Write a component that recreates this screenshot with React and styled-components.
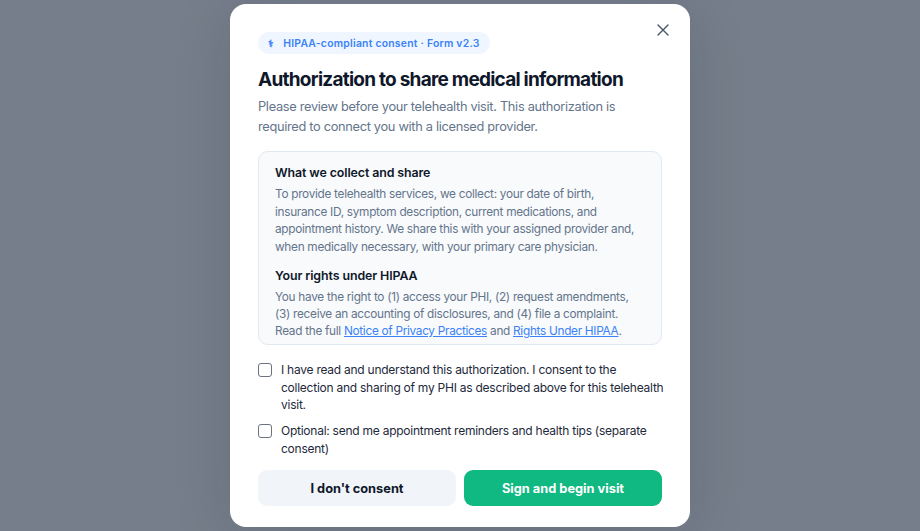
import React from 'react'
import styled, { createGlobalStyle } from 'styled-components'

const GlobalStyle = createGlobalStyle`
  html, body { margin: 0; padding: 0; height: 100%; }
  body { font-family: Inter, "Liberation Sans", sans-serif; background: #747c89; }
  * { box-sizing: border-box; }
`

const Overlay = styled.div`
  width: 100%;
  height: 531px;
  display: flex;
  align-items: center;
  justify-content: center;
  overflow: hidden;
  background: #767e8b;
`

const Modal = styled.div`
  position: relative;
  width: 460px;
  height: 523px;
  padding: 28px 28px 21px;
  background: #fff;
  border-radius: 16px;
  box-shadow: 0 8px 60px rgba(15, 23, 42, 0.14);
  display: flex;
  flex-direction: column;
`

const CloseButton = styled.button`
  position: absolute;
  top: 18px;
  right: 19px;
  width: 16px;
  height: 16px;
  padding: 0;
  border: none;
  background: none;
  color: #475569;
  display: flex;
`

const Badge = styled.div`
  align-self: flex-start;
  height: 22px;
  padding: 0 10px;
  display: flex;
  align-items: center;
  gap: 10px;
  border-radius: 999px;
  background: #eff6ff;
  color: #3b82f6;
  font-size: 10.4px;
  font-weight: 600;
  letter-spacing: 0.23px;
`

const Title = styled.h2`
  margin: 13.5px 0 0;
  font-size: 19px;
  line-height: 24px;
  font-weight: 700;
  letter-spacing: -0.75px;
  color: #0f172a;
`

const Intro = styled.p`
  margin: 5.5px 0 0;
  font-size: 12.8px;
  line-height: 20px;
  letter-spacing: -0.31px;
  color: #64748b;
`

const Disclosure = styled.div`
  margin-top: 14px;
  height: 194px;
  padding: 12px 16px 0;
  overflow: hidden;
  background: #f8fafc;
  border: 1px solid #e2e8f0;
  border-radius: 10px;
`

const SectionTitle = styled.h3`
  margin: ${({ $spaced }) => ($spaced ? '10px' : '0')} 0 0;
  font-size: 12.4px;
  line-height: 17px;
  font-weight: 600;
  letter-spacing: -0.1px;
  color: #0f172a;
`

const SectionText = styled.p`
  margin: 5px 0 0;
  font-size: 11.8px;
  line-height: ${({ $tight }) => ($tight ? '17px' : '17.7px')};
  letter-spacing: -0.29px;
  color: #64748b;
`

const PolicyLink = styled.a`
  color: #3b82f6;
  text-decoration: underline;
`

const Consents = styled.div`
  margin-top: 16px;
  display: flex;
  flex-direction: column;
  gap: 8px;
`

const ConsentRow = styled.label`
  display: flex;
  align-items: flex-start;
  gap: 9px;
  font-size: 12px;
  line-height: 17.7px;
  letter-spacing: -0.25px;
  color: #1e293b;
`

const ConsentText = styled.span`
  margin-right: -6px;
`

const Checkbox = styled.input.attrs({ type: 'checkbox' })`
  appearance: none;
  flex: none;
  width: 14px;
  height: 14px;
  margin: 2px 0 0;
  background: #fff;
  border: 1px solid #6b7280;
  border-radius: 3px;
`

const Actions = styled.div`
  margin-top: auto;
  display: grid;
  grid-template-columns: 1fr 1fr;
  gap: 8px;
`

const ActionButton = styled.button`
  height: 36px;
  border: none;
  border-radius: 9px;
  font-family: inherit;
  font-size: 12.8px;
  font-weight: 700;
  background: ${({ $primary }) => ($primary ? '#10b981' : '#f1f5f9')};
  color: ${({ $primary }) => ($primary ? '#fff' : '#0f172a')};
`

const App = () => (
  <>
    <GlobalStyle />
    <Overlay>
      <Modal>
        <CloseButton aria-label="Close">
          <svg width="16" height="16" viewBox="0 0 16 16" fill="none" stroke="currentColor" strokeWidth="1.4" strokeLinecap="round">
            <path d="M3 3l10 10M13 3L3 13" />
          </svg>
        </CloseButton>
        <Badge>
          <span>⚕</span>
          <span>HIPAA-compliant consent · Form v2.3</span>
        </Badge>
        <Title>Authorization to share medical information</Title>
        <Intro>
          Please review before your telehealth visit. This authorization is required to connect you with a licensed provider.
        </Intro>
        <Disclosure>
          <SectionTitle>What we collect and share</SectionTitle>
          <SectionText>
            To provide telehealth services, we collect: your date of birth, insurance ID, symptom description, current medications, and appointment history. We share this with your assigned provider and, when medically necessary, with your primary care physician.
          </SectionText>
          <SectionTitle $spaced>Your rights under HIPAA</SectionTitle>
          <SectionText $tight>
            You have the right to (1) access your PHI, (2) request amendments, (3) receive an accounting of disclosures, and (4) file a complaint. Read the full <PolicyLink href="#">Notice of Privacy Practices</PolicyLink> and <PolicyLink href="#">Rights Under HIPAA</PolicyLink>.
          </SectionText>
        </Disclosure>
        <Consents>
          <ConsentRow>
            <Checkbox />
            <ConsentText>I have read and understand this authorization. I consent to the collection and sharing of my PHI as described above for this telehealth visit.</ConsentText>
          </ConsentRow>
          <ConsentRow>
            <Checkbox />
            <ConsentText>Optional: send me appointment reminders and health tips (separate consent)</ConsentText>
          </ConsentRow>
        </Consents>
        <Actions>
          <ActionButton>I don't consent</ActionButton>
          <ActionButton $primary>Sign and begin visit</ActionButton>
        </Actions>
      </Modal>
    </Overlay>
  </>
)

export default App
